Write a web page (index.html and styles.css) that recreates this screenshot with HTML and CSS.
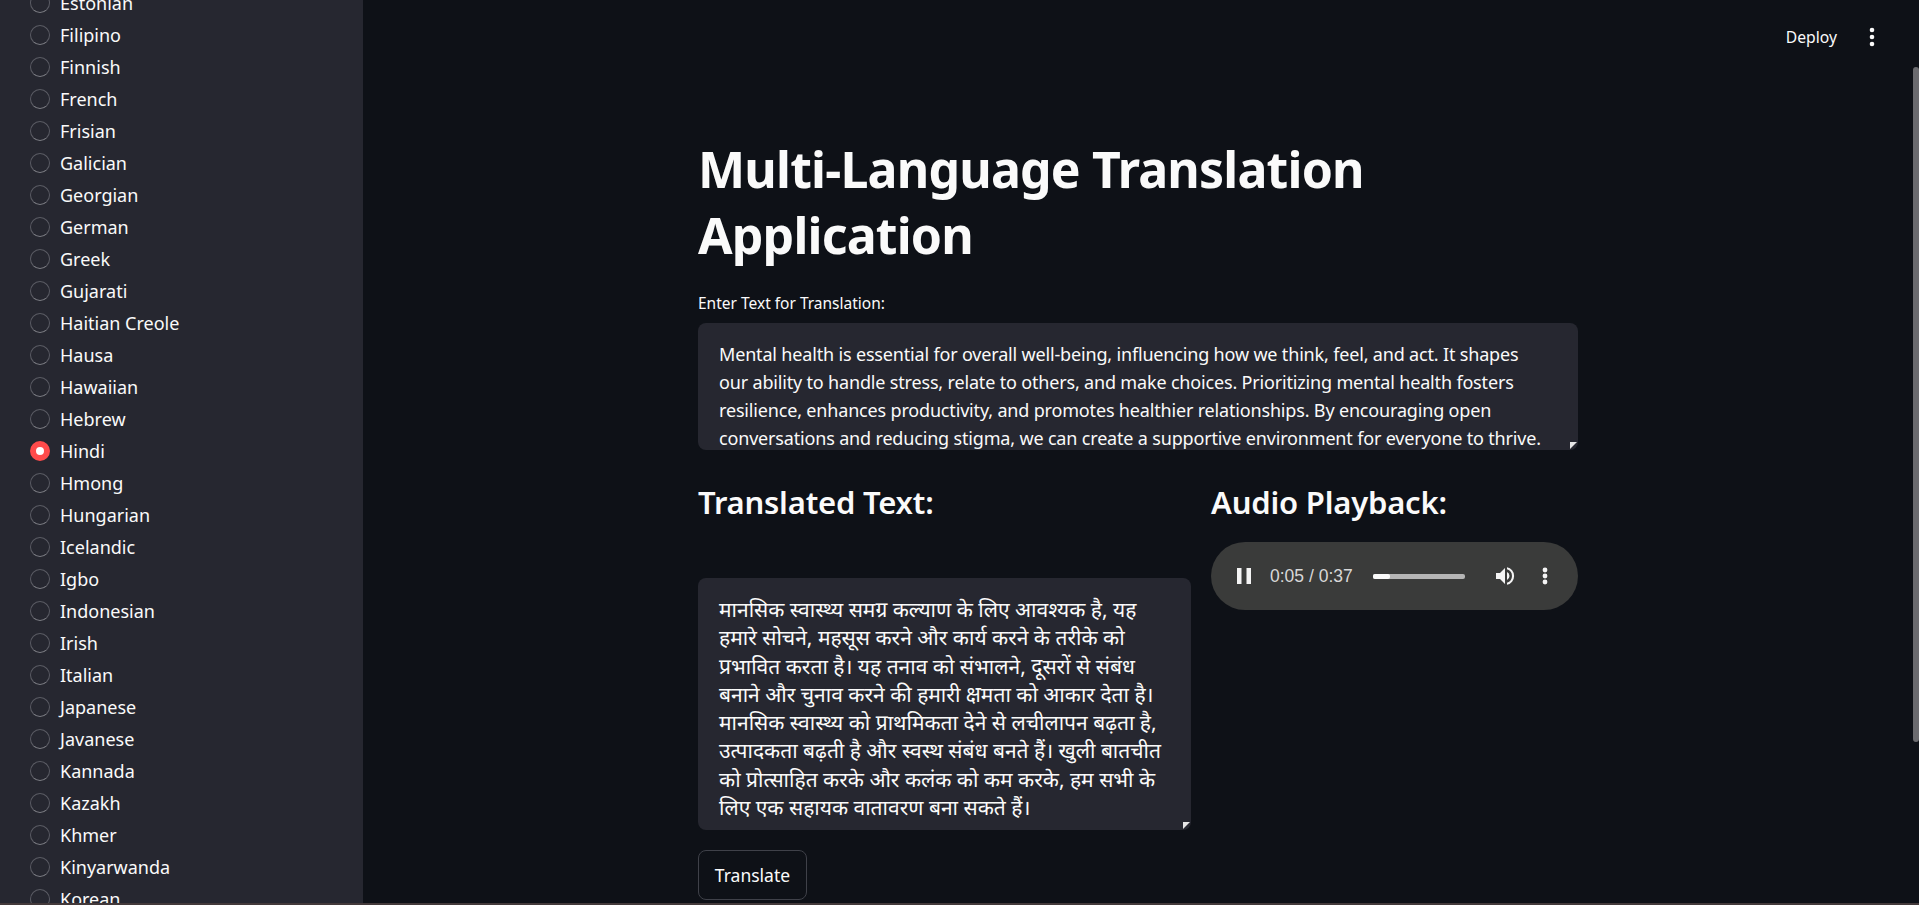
FILE: index.html
```html
<!DOCTYPE html>
<html lang="en">
<head>
    <meta charset="UTF-8">
    <title>Multi-Language Translation Application</title>
    <link rel="stylesheet" href="styles.css">
</head>
<body>
    <div class="app">
        <aside class="sidebar">
            <div class="radio-list">
                <label class="radio"><span class="dot"></span>Estonian</label>
                <label class="radio"><span class="dot"></span>Filipino</label>
                <label class="radio"><span class="dot"></span>Finnish</label>
                <label class="radio"><span class="dot"></span>French</label>
                <label class="radio"><span class="dot"></span>Frisian</label>
                <label class="radio"><span class="dot"></span>Galician</label>
                <label class="radio"><span class="dot"></span>Georgian</label>
                <label class="radio"><span class="dot"></span>German</label>
                <label class="radio"><span class="dot"></span>Greek</label>
                <label class="radio"><span class="dot"></span>Gujarati</label>
                <label class="radio"><span class="dot"></span>Haitian Creole</label>
                <label class="radio"><span class="dot"></span>Hausa</label>
                <label class="radio"><span class="dot"></span>Hawaiian</label>
                <label class="radio"><span class="dot"></span>Hebrew</label>
                <label class="radio"><span class="dot checked"></span>Hindi</label>
                <label class="radio"><span class="dot"></span>Hmong</label>
                <label class="radio"><span class="dot"></span>Hungarian</label>
                <label class="radio"><span class="dot"></span>Icelandic</label>
                <label class="radio"><span class="dot"></span>Igbo</label>
                <label class="radio"><span class="dot"></span>Indonesian</label>
                <label class="radio"><span class="dot"></span>Irish</label>
                <label class="radio"><span class="dot"></span>Italian</label>
                <label class="radio"><span class="dot"></span>Japanese</label>
                <label class="radio"><span class="dot"></span>Javanese</label>
                <label class="radio"><span class="dot"></span>Kannada</label>
                <label class="radio"><span class="dot"></span>Kazakh</label>
                <label class="radio"><span class="dot"></span>Khmer</label>
                <label class="radio"><span class="dot"></span>Kinyarwanda</label>
                <label class="radio"><span class="dot"></span>Korean</label>
            </div>
        </aside>
        <div class="content">
            <header class="toolbar">
                <span class="deploy">Deploy</span>
                <svg class="menu-icon" width="24" height="24" viewBox="0 0 24 24" fill="#fafafa"><circle cx="12" cy="5" r="2.3"/><circle cx="12" cy="12" r="2.3"/><circle cx="12" cy="19" r="2.3"/></svg>
            </header>
            <main class="main">
                <h1>Multi-Language Translation Application</h1>
                <div class="field-label">Enter Text for Translation:</div>
                <div class="textarea source">
                    Mental health is essential for overall well-being, influencing how we think, feel, and act. It shapes our ability to handle stress, relate to others, and make choices. Prioritizing mental health fosters resilience, enhances productivity, and promotes healthier relationships. By encouraging open conversations and reducing stigma, we can create a supportive environment for everyone to thrive.
                    <span class="grip"></span>
                </div>
                <div class="columns">
                    <div class="col-left">
                        <h2>Translated Text:</h2>
                        <div class="textarea translated">
                            मानसिक स्वास्थ्य समग्र कल्याण के लिए आवश्यक है, यह हमारे सोचने, महसूस करने और कार्य करने के तरीके को प्रभावित करता है। यह तनाव को संभालने, दूसरों से संबंध बनाने और चुनाव करने की हमारी क्षमता को आकार देता है। मानसिक स्वास्थ्य को प्राथमिकता देने से लचीलापन बढ़ता है, उत्पादकता बढ़ती है और स्वस्थ संबंध बनते हैं। खुली बातचीत को प्रोत्साहित करके और कलंक को कम करके, हम सभी के लिए एक सहायक वातावरण बना सकते हैं।
                            <span class="grip"></span>
                        </div>
                    </div>
                    <div class="col-right">
                        <h2>Audio Playback:</h2>
                        <div class="player">
                            <svg class="pause" width="14" height="16" viewBox="0 0 14 16" fill="#f4f4f4"><rect x="0" y="0" width="4.5" height="16"/><rect x="9.5" y="0" width="4.5" height="16"/></svg>
                            <span class="time">0:05 / 0:37</span>
                            <div class="track"><div class="track-fill"></div></div>
                            <svg class="volume" width="24" height="24" viewBox="0 0 24 24" fill="#f4f4f4"><path d="M3 9v6h4l5 5V4L7 9H3zm13.5 3A4.5 4.5 0 0 0 14 8v8a4.5 4.5 0 0 0 2.5-4zM14 3.2v2.1a7 7 0 0 1 0 13.4v2.1a9 9 0 0 0 0-17.6z"/></svg>
                            <svg class="more" width="8" height="20" viewBox="0 0 8 20" fill="#f4f4f4"><circle cx="4" cy="4" r="2.4"/><circle cx="4" cy="10" r="2.4"/><circle cx="4" cy="16" r="2.4"/></svg>
                        </div>
                    </div>
                </div>
                <button class="btn">Translate</button>
            </main>
            <div class="scrollbar"></div>
        </div>
    </div>
</body>
</html>
```

FILE: styles.css
```css
html, body {
    margin: 0;
    padding: 0;
    height: 100%;
    overflow: hidden;
}
body {
    background: #0e1117;
    color: #fafafa;
    font-family: "Noto Sans", "Open Sans", sans-serif;
}
.app {
    display: flex;
    height: 905px;
    box-sizing: border-box;
    border-bottom: 2px solid #43393a;
}
.sidebar {
    width: 363px;
    flex-shrink: 0;
    background: #262730;
    overflow: hidden;
}
.radio-list {
    margin-top: -13px;
    padding-left: 30px;
    display: flex;
    flex-direction: column;
}
.radio {
    height: 32px;
    display: flex;
    align-items: center;
    gap: 10px;
    font-size: 18px;
    line-height: 32px;
}
.dot {
    width: 20px;
    height: 20px;
    box-sizing: border-box;
    border-radius: 50%;
    border: 1px solid #5b5c64;
    border-bottom-color: #7d7e84;
}
.dot.checked {
    border: 6px solid #ff4b4b;
    background: #fff;
}
.content {
    flex: 1;
    position: relative;
    min-width: 0;
}
.toolbar {
    height: 74px;
    display: flex;
    justify-content: flex-end;
    align-items: center;
    gap: 23px;
    padding-right: 35px;
}
.deploy {
    font-size: 15.7px;
}
.main {
    width: 880px;
    margin-left: 335px;
}
h1 {
    margin: 62px 0 0;
    font-size: 50px;
    letter-spacing: -0.8px;
    line-height: 66px;
    font-weight: 700;
}
.field-label {
    margin-top: 25px;
    font-size: 15.5px;
    line-height: 20px;
}
.textarea {
    position: relative;
    background: #262730;
    border-radius: 8px;
    overflow: hidden;
    box-sizing: border-box;
    font-size: 18px;
}
.source {
    margin-top: 10px;
    height: 127px;
    padding: 17px 30px 17px 21px;
    line-height: 28px;
    letter-spacing: -0.17px;
}
.grip {
    position: absolute;
    right: 1px;
    bottom: 1px;
    width: 0;
    height: 0;
    border-right: 7px solid transparent;
    border-top: 7px solid #e6e6e6;
}
.columns {
    margin-top: 20px;
    display: flex;
    gap: 20px;
}
.col-left {
    width: 493px;
}
.col-right {
    flex: 1;
}
h2 {
    margin: 0;
    font-size: 31px;
    letter-spacing: -0.2px;
    line-height: 64px;
    font-weight: 600;
}
.translated {
    margin-top: 44px;
    height: 252px;
    padding: 17px 21px;
    font-family: "Noto Sans", "Noto Sans Devanagari", sans-serif;
    font-size: 21px;
    line-height: 28.3px;
}
.player {
    margin-top: 8px;
    height: 68px;
    border-radius: 34px;
    background: #3a3b3a;
    display: flex;
    align-items: center;
    padding-left: 26px;
}
.time {
    margin-left: 19px;
    font-family: "Liberation Sans", sans-serif;
    font-size: 17.5px;
    color: #d8d8d8;
}
.track {
    width: 92px;
    height: 5px;
    margin-left: 20px;
    background: #b5b5b5;
    border-radius: 2px;
}
.track-fill {
    width: 17px;
    height: 5px;
    background: #fafafa;
    border-radius: 2px;
}
.volume {
    margin-left: 28px;
}
.more {
    margin-left: 24px;
}
.btn {
    margin-top: 20px;
    height: 50px;
    width: 109px;
    padding: 0;
    background: #0e1117;
    color: #fafafa;
    border: 1px solid #3f4149;
    border-radius: 8px;
    font-family: inherit;
    font-size: 17.5px;
}
.scrollbar {
    position: absolute;
    top: 67px;
    right: 0;
    width: 6px;
    height: 675px;
    background: #6b6b6f;
    border-radius: 3px;
}
```
